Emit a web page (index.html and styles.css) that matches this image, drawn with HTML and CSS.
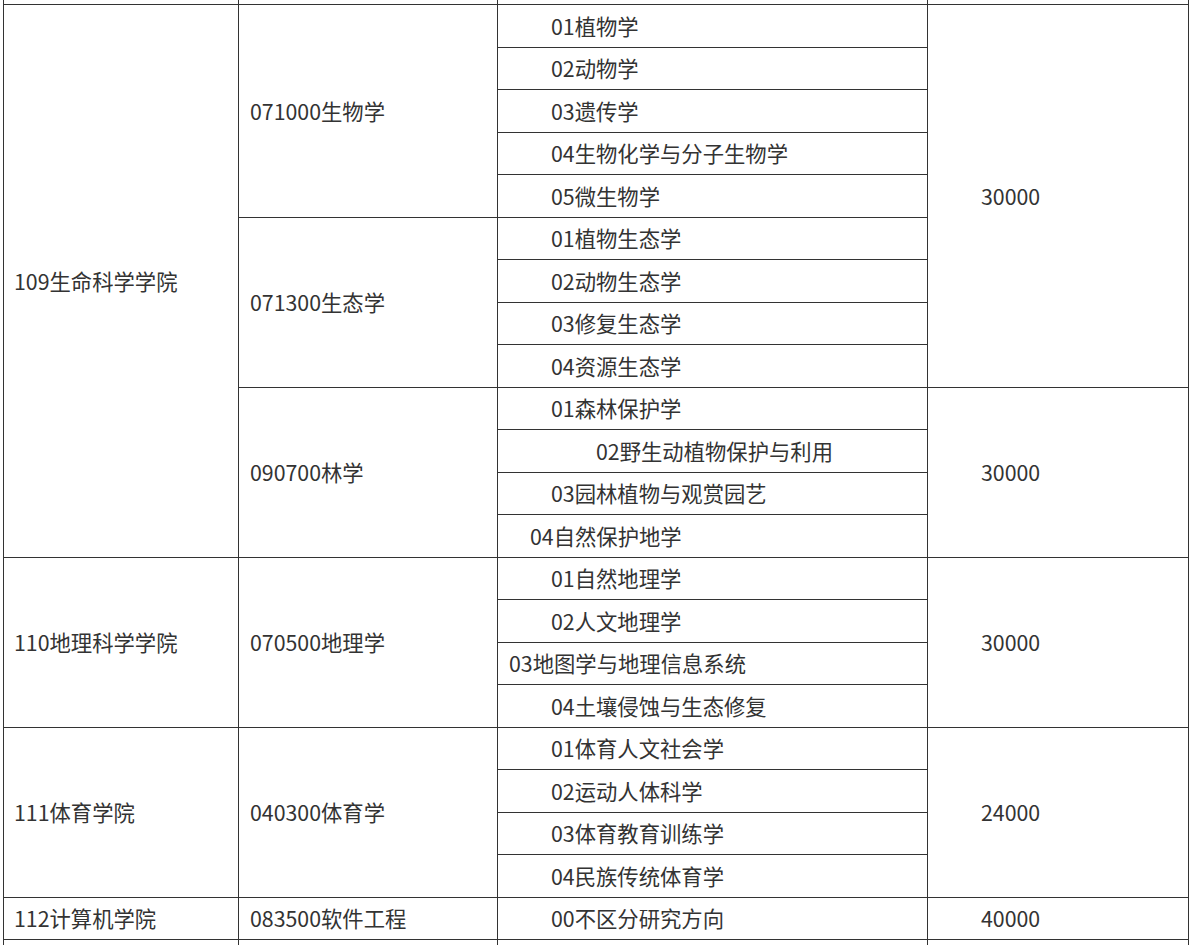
FILE: index.html
```html
<!DOCTYPE html>
<html lang="zh">
<head>
<meta charset="utf-8">
<link rel="stylesheet" href="styles.css">
</head>
<body>
<table class="grid">
  <colgroup>
    <col class="c1"><col class="c2"><col class="c3"><col class="c4">
  </colgroup>
  <tbody>
    <tr class="stub"><td></td><td></td><td></td><td></td></tr>
    <tr>
      <td class="college" rowspan="13">109生命科学学院</td>
      <td class="major" rowspan="5">071000生物学</td>
      <td class="dir">01植物学</td>
      <td class="fee" rowspan="9">30000</td>
    </tr>
    <tr><td class="dir">02动物学</td></tr>
    <tr><td class="dir">03遗传学</td></tr>
    <tr><td class="dir">04生物化学与分子生物学</td></tr>
    <tr><td class="dir">05微生物学</td></tr>
    <tr>
      <td class="major" rowspan="4">071300生态学</td>
      <td class="dir">01植物生态学</td>
    </tr>
    <tr><td class="dir">02动物生态学</td></tr>
    <tr><td class="dir">03修复生态学</td></tr>
    <tr><td class="dir">04资源生态学</td></tr>
    <tr>
      <td class="major" rowspan="4">090700林学</td>
      <td class="dir">01森林保护学</td>
      <td class="fee" rowspan="4">30000</td>
    </tr>
    <tr><td class="dir dir-wide">02野生动植物保护与利用</td></tr>
    <tr><td class="dir">03园林植物与观赏园艺</td></tr>
    <tr><td class="dir dir-mid">04自然保护地学</td></tr>
    <tr>
      <td class="college" rowspan="4">110地理科学学院</td>
      <td class="major" rowspan="4">070500地理学</td>
      <td class="dir">01自然地理学</td>
      <td class="fee" rowspan="4">30000</td>
    </tr>
    <tr><td class="dir">02人文地理学</td></tr>
    <tr><td class="dir dir-narrow">03地图学与地理信息系统</td></tr>
    <tr><td class="dir">04土壤侵蚀与生态修复</td></tr>
    <tr>
      <td class="college" rowspan="4">111体育学院</td>
      <td class="major" rowspan="4">040300体育学</td>
      <td class="dir">01体育人文社会学</td>
      <td class="fee" rowspan="4">24000</td>
    </tr>
    <tr><td class="dir">02运动人体科学</td></tr>
    <tr><td class="dir">03体育教育训练学</td></tr>
    <tr><td class="dir">04民族传统体育学</td></tr>
    <tr>
      <td class="college">112计算机学院</td>
      <td class="major">083500软件工程</td>
      <td class="dir">00不区分研究方向</td>
      <td class="fee">40000</td>
    </tr>
    <tr class="tail"><td></td><td></td><td></td><td></td></tr>
  </tbody>
</table>
</body>
</html>
```
FILE: styles.css
```css
html, body {
  margin: 0;
  padding: 0;
  background: #ffffff;
}

body {
  font-family: "Noto Sans CJK SC", "Noto Sans", sans-serif;
  font-size: 21.33px;
  color: #333333;
  overflow: hidden;
}

.grid {
  border-collapse: collapse;
  table-layout: fixed;
  width: 1185px;
  margin-left: 3px;
}

.c1 { width: 235px; }
.c2 { width: 259px; }
.c3 { width: 430px; }
.c4 { width: 261px; }

.grid td {
  border: 1px solid #333333;
  height: 41.5px;
  padding: 0;
  vertical-align: middle;
  line-height: 1.2;
  white-space: nowrap;
}

.grid tr.stub td {
  height: 4px;
  border-top: none;
}

.grid tr.tail td {
  height: 42px;
}

.college { padding-left: 10px !important; }
.major { padding-left: 11px !important; }
.dir { padding-left: 53px !important; }
.dir-wide { padding-left: 98px !important; }
.dir-mid { padding-left: 32px !important; }
.dir-narrow { padding-left: 11px !important; }
.fee { padding-left: 53px !important; }
```
